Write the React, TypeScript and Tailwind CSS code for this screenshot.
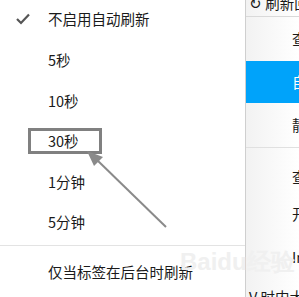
import React from 'react';

// --- Data ---
const INTERVALS = ['5秒', '10秒', '30秒', '1分钟', '5分钟'];

const cjk = { fontFamily: '"Noto Sans CJK SC", "Noto Sans", sans-serif' };

function CheckIcon() {
    return (
        <svg width="14" height="12" viewBox="0 0 14 12" className="shrink-0">
            <path d="M1 6 L5 10 L13 1.5" fill="none" stroke="#555" strokeWidth="2.2" />
        </svg>
    );
}

// --- Component ---
export default function App() {
    return (
        <div className="relative w-[299px] h-[297px] overflow-hidden bg-white flex" style={cjk}>
            {/* Refresh menu */}
            <div className="w-[245px] shrink-0 flex flex-col -mt-[1px] text-[14.5px] text-[#1a1a1a]">
                <div className="h-[42.5px] flex items-center">
                    <div className="w-[48px] pl-[16px] flex items-center">
                        <CheckIcon />
                    </div>
                    <span>不启用自动刷新</span>
                </div>
                {INTERVALS.map((label) => (
                    <div key={label} className="h-[42.5px] flex items-center pl-[48px]">
                        {label}
                    </div>
                ))}
                <div className="h-px bg-[#e3e3e3] mt-[3px]" />
                <div className="h-[53px] flex items-center pl-[48px]">仅当标签在后台时刷新</div>
            </div>

            {/* Side menu, cut off by the window */}
            <div className="flex-1 flex flex-col border-l border-[#cfcfcf] bg-gradient-to-r from-[#f2f2f2] to-white text-[14.5px] text-[#1a1a1a] overflow-hidden whitespace-nowrap">
                <div className="h-[17px] shrink-0 border-b border-[#d9d9d9] pl-[3px] flex items-end pb-[6px] leading-none">
                    <span>↻ 刷新回</span>
                </div>
                <div className="h-[44px] shrink-0 flex items-center pl-[46px]">查看</div>
                <div className="h-[42px] shrink-0 flex items-center pl-[46px] bg-[#00a3fa] text-white">自动</div>
                <div className="h-[45px] shrink-0 flex items-center pl-[46px] border-b border-[#e0e0e0]">静音</div>
                <div className="h-[56px] shrink-0 flex items-center pl-[46px] pt-[2px]">查看</div>
                <div className="h-[20px] shrink-0 flex items-center pl-[46px]">开发</div>
                <div className="h-[66px] shrink-0 flex items-center pl-[46px]">In</div>
                <div className="flex items-center pl-[3px] leading-none">V 时内大</div>
            </div>

            {/* Watermark */}
            <div
                className="absolute left-[180px] top-[250px] text-[24px] font-bold text-[#f0f0f0] leading-none whitespace-nowrap pointer-events-none"
                style={{ fontFamily: '"Liberation Sans", sans-serif' }}
            >
                Baidu经验
            </div>

            {/* Annotation: box around 30秒 and arrow */}
            <div className="absolute left-[28px] top-[128px] w-[74px] h-[26px] border-[3px] border-[#808080]" />
            <svg className="absolute left-0 top-0 pointer-events-none" width="299" height="297">
                <line x1="166" y1="227" x2="96" y2="159" stroke="#8a8a8a" strokeWidth="2" />
                <polygon points="87,151 103,157 94,166" fill="#8a8a8a" />
            </svg>
        </div>
    );
}
